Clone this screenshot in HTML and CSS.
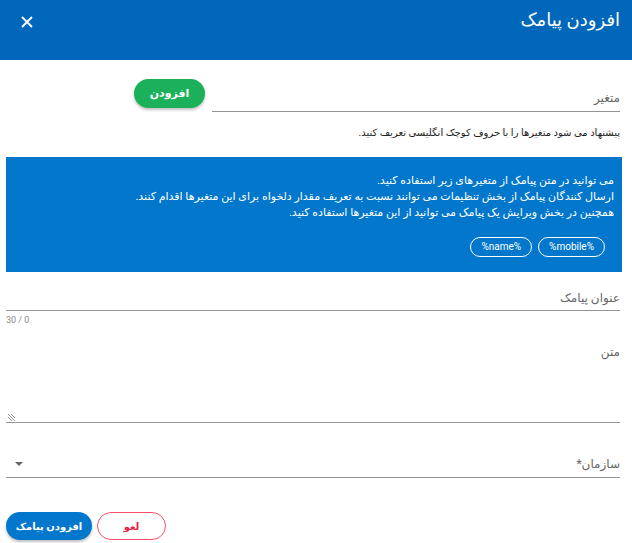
FILE: index.html
```html
<!DOCTYPE html>
<html lang="fa" dir="rtl">
<head>
<meta charset="utf-8">
<link rel="stylesheet" href="styles.css">
</head>
<body>
<div class="dialog">
  <header class="head">
    <h1 class="title">افزودن پیامک</h1>
    <button class="close" aria-label="close">
      <svg width="12" height="12" viewBox="0 0 12 12"><path d="M1 1L11 11M11 1L1 11" stroke="#fff" stroke-width="1.8"/></svg>
    </button>
  </header>
  <main class="content">
    <div class="var-row">
      <div class="field var-field"><span class="label">متغیر</span></div>
      <button class="btn-green">افزودن</button>
    </div>
    <p class="hint">پیشنهاد می شود متغیرها را با حروف کوچک انگلیسی تعریف کنید.</p>
    <div class="info">
      <p>می توانید در متن پیامک از متغیرهای زیر استفاده کنید.</p>
      <p>ارسال کنندگان پیامک از بخش تنظیمات می توانند نسبت به تعریف مقدار دلخواه برای این متغیرها اقدام کنند.</p>
      <p>همچنین در بخش ویرایش یک پیامک می توانید از این متغیرها استفاده کنید.</p>
      <div class="chips">
        <span class="chip">%mobile%</span>
        <span class="chip">%name%</span>
      </div>
    </div>
    <div class="field title-field"><span class="label">عنوان پیامک</span></div>
    <div class="counter">30 / 0</div>
    <div class="field text-field">
      <span class="label">متن</span>
      <svg class="resize" width="8" height="8" viewBox="0 0 8 8"><path d="M0 1L7 8M3 1L7 5M0 4L4 8" stroke="#777" stroke-width="0.8"/></svg>
    </div>
    <div class="field select-field">
      <span class="label">سازمان*</span>
      <span class="arrow"></span>
    </div>
    <div class="actions">
      <button class="btn-primary">افزودن پیامک</button>
      <button class="btn-cancel">لغو</button>
    </div>
  </main>
</div>
</body>
</html>
```
FILE: styles.css
```css
* { box-sizing: border-box; }
html, body { margin: 0; padding: 0; background: #fff; }
body {
  font-family: Roboto, "DejaVu Sans", sans-serif;
  color: #222;
  width: 632px;
  height: 543px;
  overflow: hidden;
}
.head {
  height: 60px;
  background: #0067bb;
  display: flex;
  justify-content: space-between;
  align-items: flex-start;
  padding: 8px 12px 0 20px;
}
.title {
  margin: 0;
  font-size: 18px;
  font-weight: normal;
  color: #fff;
  line-height: 24px;
}
.close {
  background: none;
  border: 0;
  padding: 0;
  margin-top: 7px;
  width: 14px;
  height: 14px;
  display: flex;
  align-items: center;
  justify-content: center;
}
.content {
  padding: 0 12px 0 6px;
}
.var-row {
  display: flex;
  align-items: flex-end;
  gap: 7px;
  padding-top: 18px;
}
.field {
  border-bottom: 1px solid #949494;
  position: relative;
  display: flex;
  align-items: flex-end;
  justify-content: space-between;
}
.label {
  font-size: 12px;
  color: #666;
  line-height: 16px;
}
.var-field {
  width: 408px;
  height: 34px;
  padding-bottom: 5px;
}
.btn-green {
  width: 71px;
  height: 29px;
  border: 0;
  border-radius: 15px;
  background: #1bb05a;
  color: #fff;
  font-family: inherit;
  font-size: 11px;
  font-weight: bold;
  box-shadow: 0 2px 3px rgba(0,0,0,0.25);
  margin-bottom: 4px;
}
.hint {
  margin: 13px 0 0;
  font-size: 10px;
  line-height: 16px;
  color: #222;
}
.info {
  margin: 16px -2px 0 0;
  background: #0277cc;
  color: #fff;
  height: 115px;
  padding: 16px 8px 0 10px;
}
.info p {
  margin: 0;
  font-size: 11px;
  line-height: 16px;
}
.chips {
  display: flex;
  gap: 6px;
  margin-top: 16px;
  padding-right: 9px;
}
.chip {
  border: 1px solid #fff;
  border-radius: 10px;
  height: 20px;
  padding: 0 10px;
  font-size: 10px;
  line-height: 18px;
  color: #fff;
  direction: ltr;
}
.title-field {
  margin-top: 16px;
  height: 23px;
  padding-bottom: 4px;
}
.counter {
  direction: ltr;
  text-align: left;
  font-size: 9px;
  color: #888;
  line-height: 12px;
  margin-top: 3px;
}
.text-field {
  margin-top: 18px;
  height: 79px;
  align-items: flex-start;
}
.text-field .resize {
  position: absolute;
  left: 2px;
  bottom: 1px;
}
.select-field {
  margin-top: 30px;
  height: 25px;
  padding-bottom: 5px;
}
.arrow {
  width: 0;
  height: 0;
  border-left: 4px solid transparent;
  border-right: 4px solid transparent;
  border-top: 4px solid #666;
  margin: 0 0 6px 9px;
  order: 2;
}
.actions {
  direction: ltr;
  display: flex;
  gap: 5px;
  margin-top: 34px;
}
.btn-primary {
  width: 86px;
  height: 28px;
  border: 0;
  border-radius: 14px;
  background: #0277cc;
  color: #fff;
  font-family: inherit;
  font-size: 10px;
  font-weight: bold;
  box-shadow: 0 2px 3px rgba(0,0,0,0.25);
}
.btn-cancel {
  width: 69px;
  height: 28px;
  border: 1px solid #ff4d6a;
  border-radius: 14px;
  background: #fff;
  color: #e8193c;
  font-family: inherit;
  font-size: 10px;
  font-weight: bold;
}
```
